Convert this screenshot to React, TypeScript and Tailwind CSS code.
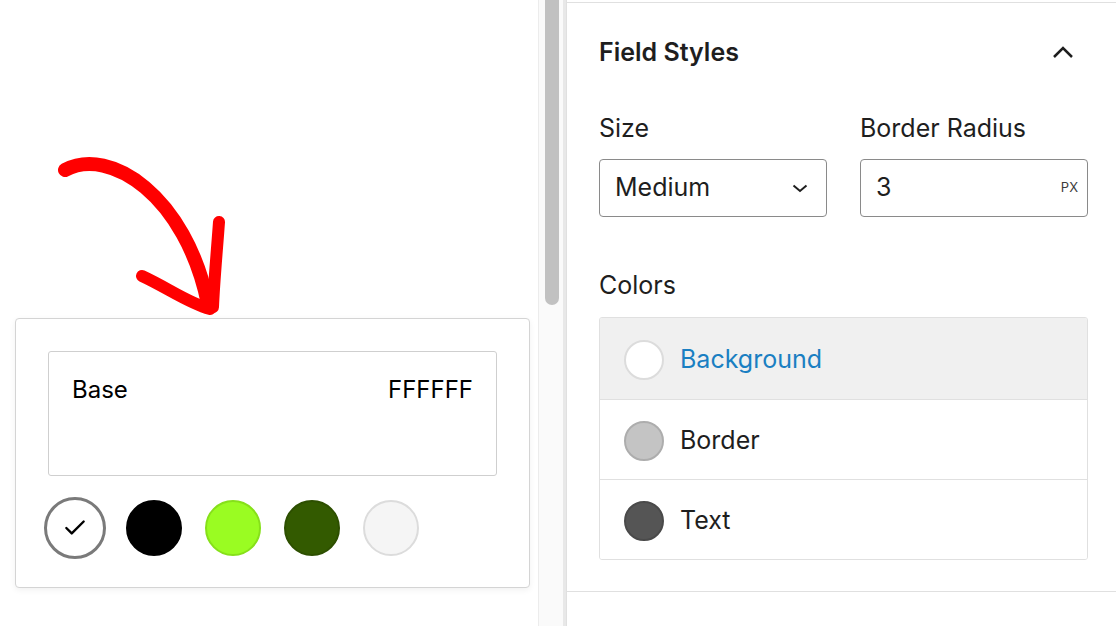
import { Check } from 'lucide-react'

const swatches = [
    { color: 'bg-black', ring: 'border-black' },
    { color: 'bg-[#9afc22]', ring: 'border-[#86e01a]' },
    { color: 'bg-[#335a00]', ring: 'border-[#2d4f00]' },
    { color: 'bg-[#f5f5f5]', ring: 'border-[#dcdcdc]' },
]

const colorRows = [
    { label: 'Background', dot: 'bg-white border-[#dcdcdc]', active: true },
    { label: 'Border', dot: 'bg-[#c4c4c4] border-[#adadad]', active: false },
    { label: 'Text', dot: 'bg-[#555555] border-[#4a4a4a]', active: false },
]

function Arrow() {
    return (
        <svg className="block h-[318px] w-full" viewBox="0 0 538 318" fill="none">
            <g stroke="#ff0000" strokeLinecap="round" strokeLinejoin="round">
                <path d="M65 170 C 110 146, 186 196, 208 304" strokeWidth="14" />
                <path d="M219 222 C 217 250, 214 282, 213 307" strokeWidth="12" />
                <path d="M142 276 C 168 288, 188 303, 210 309" strokeWidth="12" />
            </g>
        </svg>
    )
}

export default function App() {
    return (
        <div className="flex h-[626px] w-[1116px] overflow-hidden bg-white text-[#1e1e1e] font-['Inter',sans-serif]">
            {/* Preview column */}
            <div className="w-[538px] shrink-0">
                <Arrow />
                <div className="ml-[15px] w-[515px] h-[270px] rounded-[4px] border border-[#d4d4d4] bg-white shadow-[0_2px_6px_rgba(0,0,0,0.06)] px-[32px] pt-[32px]">
                    <div className="h-[125px] rounded-[3px] border border-[#cfcfcf] flex justify-between px-[23px] pt-[23px] text-[24px] leading-[30px] text-black">
                        <span>Base</span>
                        <span>FFFFFF</span>
                    </div>
                    <div className="flex items-center gap-[17px] -ml-[4px] mt-[21px]">
                        <div className="w-[62px] h-[62px] rounded-full border-[3px] border-[#7a7a7a] bg-white flex items-center justify-center">
                            <Check className="w-[26px] h-[26px] text-black" strokeWidth={2.2} />
                        </div>
                        {swatches.map((s, i) => (
                            <div key={i} className="w-[62px] flex justify-center">
                                <div className={`w-[56px] h-[56px] rounded-full border-2 ${s.color} ${s.ring}`} />
                            </div>
                        ))}
                    </div>
                </div>
            </div>

            {/* Scrollbar */}
            <div className="w-[28px] shrink-0 h-full bg-[#fafafa] border-l border-[#ececec] border-r-[3px] border-r-[#e8e8e8] pl-[6px]">
                <div className="w-[14px] h-[305px] rounded-b-full bg-[#c1c1c1]" />
            </div>

            {/* Settings panel */}
            <div className="flex-1 border-l border-[#e0e0e0]">
                <div className="mt-[2px] border-t border-[#e0e0e0] pl-[32px] pr-[28px] pb-[31px] border-b">
                    <div className="flex items-center justify-between pt-[33px] pr-[14px]">
                        <h2 className="text-[25px] leading-[32px] font-semibold">Field Styles</h2>
                        <svg width="22" height="14" viewBox="0 0 22 14" fill="none">
                            <path d="M2 12 L11 3 L20 12" stroke="#1e1e1e" strokeWidth="2.5" />
                        </svg>
                    </div>

                    <div className="flex gap-[33px] mt-[45px]">
                        <div className="w-[228px]">
                            <div className="text-[25px] leading-[30px]">Size</div>
                            <div className="mt-[16px] h-[58px] rounded-[4px] border border-[#8a8a8a] flex items-center justify-between pl-[15px] pr-[18px]">
                                <span className="text-[25px]">Medium</span>
                                <svg width="16" height="9" viewBox="0 0 16 9" fill="none">
                                    <path d="M1.5 1.5 L8 7 L14.5 1.5" stroke="#1e1e1e" strokeWidth="2" />
                                </svg>
                            </div>
                        </div>
                        <div className="w-[228px]">
                            <div className="text-[25px] leading-[30px]">Border Radius</div>
                            <div className="mt-[16px] h-[58px] rounded-[4px] border border-[#8a8a8a] flex items-center justify-between pl-[15px] pr-[9px]">
                                <span className="text-[25px]">3</span>
                                <span className="text-[13px] text-[#3c3c3c]">PX</span>
                            </div>
                        </div>
                    </div>

                    <div className="text-[25px] leading-[30px] mt-[53px]">Colors</div>
                    <div className="mt-[17px] rounded-[3px] border border-[#e0e0e0] overflow-hidden">
                        {colorRows.map((r, i) => (
                            <div
                                key={r.label}
                                className={`flex items-center gap-[16px] pl-[24px] pt-[2px] ${i > 0 ? 'h-[80px] border-t border-[#e0e0e0]' : 'h-[81px]'} ${r.active ? 'bg-[#f0f0f0]' : 'bg-white'}`}
                            >
                                <div className={`w-[40px] h-[40px] rounded-full border-2 ${r.dot}`} />
                                <span className={`text-[25px] ${r.active ? 'text-[#1a7fc2]' : ''}`}>{r.label}</span>
                            </div>
                        ))}
                    </div>
                </div>
            </div>
        </div>
    )
}
